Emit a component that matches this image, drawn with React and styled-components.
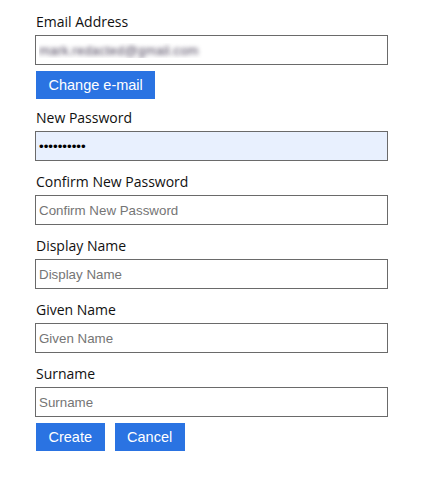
import React from 'react';
import styled, { createGlobalStyle } from 'styled-components';

const GlobalStyle = createGlobalStyle`
  body {
    margin: 0;
    background: #fff;
    font-family: 'Open Sans', 'Noto Sans', sans-serif;
  }
`;

const fields = [
  { id: 'confirm', label: 'Confirm New Password' },
  { id: 'display', label: 'Display Name' },
  { id: 'given', label: 'Given Name' },
  { id: 'surname', label: 'Surname' },
];

const App = () => {
  return (
    <>
      <GlobalStyle />
      <Form onSubmit={(e) => e.preventDefault()}>
        <Field>
          <Label htmlFor='email'>Email Address</Label>
          <Input id='email' type='text' defaultValue='mark.redacted@gmail.com' $hidden readOnly />
        </Field>
        <Actions>
          <Button type='button'>Change e-mail</Button>
        </Actions>

        <Field>
          <Label htmlFor='password'>New Password</Label>
          <Input id='password' type='password' defaultValue='password12' $filled />
        </Field>

        {fields.map((f) => (
          <Field key={f.id}>
            <Label htmlFor={f.id}>{f.label}</Label>
            <Input id={f.id} type='text' placeholder={f.label} />
          </Field>
        ))}

        <Actions>
          <Button type='submit'>Create</Button>
          <Button type='button'>Cancel</Button>
        </Actions>
      </Form>
    </>
  );
};

export default App;

const Form = styled.form`
  display: flex;
  flex-direction: column;
  padding: 11px 0 30px 35px;
  width: 353px;
`;

const Field = styled.div`
  display: flex;
  flex-direction: column;
  margin-bottom: 10px;
`;

const Label = styled.label`
  font-size: 14px;
  line-height: 21px;
  color: #111;
  padding-left: 1px;
  margin-bottom: 3px;
`;

const Input = styled.input`
  box-sizing: border-box;
  width: 353px;
  height: 30px;
  margin: 0;
  padding: 0 3px;
  border: 1px solid #6a6a6a;
  border-radius: 0;
  outline: none;
  font-family: 'Liberation Sans', Arial, sans-serif;
  font-size: 13.333px;
  color: #000;
  background: ${(props) => (props.$filled ? '#e8f0fe' : '#fff')};
  ${(props) =>
    props.$hidden &&
    `
    color: transparent;
    text-shadow: 0 0 4px rgba(70, 60, 85, 0.95);
  `}

  &::placeholder {
    color: #757575;
  }
`;

const Actions = styled.div`
  display: flex;
  gap: 10px;
  margin: -4px 0 8px 1px;
`;

const Button = styled.button`
  height: 28px;
  padding: 0 12.5px;
  border: none;
  border-radius: 0;
  background: #2a73e2;
  color: #fff;
  font-family: 'Liberation Sans', Arial, sans-serif;
  font-size: 14.5px;
  cursor: pointer;
`;
